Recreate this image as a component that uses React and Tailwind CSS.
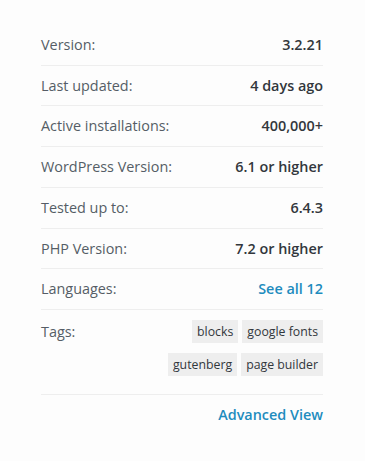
import React from 'react'

const rows = [
  { label: 'Version:', value: '3.2.21' },
  { label: 'Last updated:', value: '4 days ago' },
  { label: 'Active installations:', value: '400,000+' },
  { label: 'WordPress Version:', value: '6.1 or higher' },
  { label: 'Tested up to:', value: '6.4.3' },
  { label: 'PHP Version:', value: '7.2 or higher' },
  { label: 'Languages:', value: 'See all 12', link: true },
]

const tags = ['blocks', 'google fonts', 'gutenberg', 'page builder']

export default function App() {
  return (
    <div className="min-h-[461px] w-[365px] bg-[#fdfdfd] font-['Open_Sans',sans-serif] text-[14.4px]">
      <div className="ml-[41px] w-[282px] pt-[25px]">
        <ul>
          {rows.map((row) => (
            <li
              key={row.label}
              className="flex items-center justify-between border-b border-[#eeeeee] py-[10px] leading-[19.7px]"
            >
              <span className="text-[#555d66]">{row.label}</span>
              {row.link ? (
                <a className="font-semibold text-[#1e8cbe]">{row.value}</a>
              ) : (
                <span className="font-semibold text-[#32373c]">{row.value}</span>
              )}
            </li>
          ))}
          <li className="flex justify-between border-b border-[#eeeeee] pt-[10px] pb-[18px]">
            <span className="pt-[2px] leading-[20px] text-[#555d66]">Tags:</span>
            <div className="flex w-[170px] flex-wrap justify-end gap-x-[4px] gap-y-[10px]">
              {tags.map((tag) => (
                <span
                  key={tag}
                  className="h-[23px] bg-[#eeeeee] px-[5px] text-[12.3px] leading-[23px] text-[#32373c]"
                >
                  {tag}
                </span>
              ))}
            </div>
          </li>
        </ul>
        <div className="flex justify-end pt-[10px]">
          <a className="font-semibold leading-[20px] text-[#1e8cbe]">Advanced View</a>
        </div>
      </div>
    </div>
  )
}
